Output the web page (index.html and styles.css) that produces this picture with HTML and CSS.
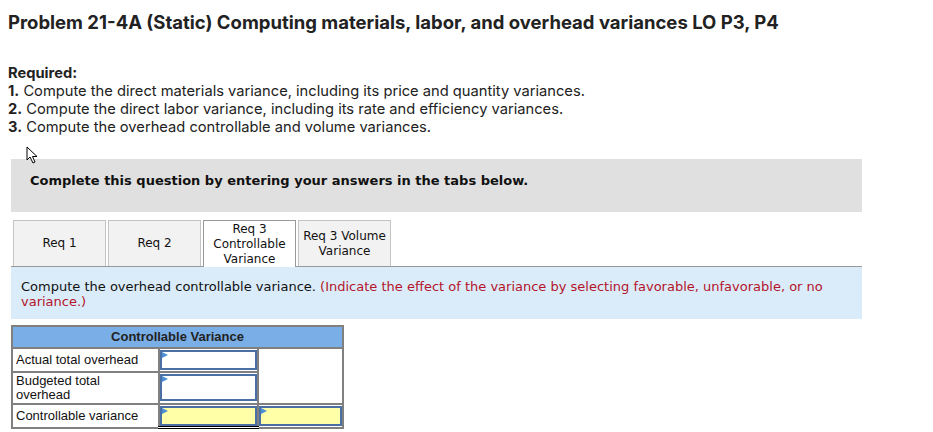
FILE: index.html
```html
<!DOCTYPE html>
<html>
<head>
<meta charset="utf-8">
<link rel="stylesheet" href="styles.css">
</head>
<body>
<h1 class="title">Problem 21-4A (Static) Computing materials, labor, and overhead variances LO P3, P4</h1>
<div class="required">
  <p class="req-head">Required:</p>
  <p><b>1.</b> Compute the direct materials variance, including its price and quantity variances.</p>
  <p><b>2.</b> Compute the direct labor variance, including its rate and efficiency variances.</p>
  <p><b>3.</b> Compute the overhead controllable and volume variances.</p>
</div>
<div class="cursor-row">
  <svg class="cursor" width="13" height="18" viewBox="0 0 13 18"><path d="M1 1 L1 14 L4 11 L7 17 L9 16 L6.5 10.5 L11 10.5 Z" fill="#fff" stroke="#000" stroke-width="1" stroke-linejoin="miter"/></svg>
</div>
<div class="panel">
  <div class="banner">Complete this question by entering your answers in the tabs below.</div>
  <div class="tabs">
    <div class="tab">Req 1</div>
    <div class="tab">Req 2</div>
    <div class="tab active">Req 3<br>Controllable<br>Variance</div>
    <div class="tab">Req 3 Volume<br>Variance</div>
  </div>
  <div class="instr">Compute the overhead controllable variance. <span class="red">(Indicate the effect of the variance by selecting favorable, unfavorable, or no variance.)</span></div>
  <table class="cv">
    <colgroup><col class="c1"><col class="c2"><col class="c3"></colgroup>
    <tr class="hd"><th colspan="3">Controllable Variance</th></tr>
    <tr class="r1">
      <td class="lbl">Actual total overhead</td>
      <td class="inp"><div class="box"></div></td>
      <td class="blank" rowspan="2"></td>
    </tr>
    <tr class="r2">
      <td class="lbl">Budgeted total<br>overhead</td>
      <td class="inp"><div class="box tall"></div></td>
    </tr>
    <tr class="r3">
      <td class="lbl">Controllable variance</td>
      <td class="inp dbl"><div class="box yellow"></div></td>
      <td class="inp"><div class="box yellow"></div></td>
    </tr>
  </table>
</div>
</body>
</html>
```

FILE: styles.css
```css
html, body { margin: 0; padding: 0; background: #fff; }
body { padding: 0 8px; color: #222; }
.title {
  font-family: "Inter", sans-serif;
  font-weight: 700;
  font-size: 18.5px;
  line-height: 22px;
  margin: 0;
  padding-top: 11px;
  color: #222;
}
.required {
  margin-top: 31px;
  font-family: "Inter", sans-serif;
  font-size: 14.7px;
  line-height: 18px;
  color: #222;
}
.required p { margin: 0; }
.req-head { font-weight: 700; }
.cursor-row { height: 23px; padding-left: 18px; padding-top: 10px; box-sizing: border-box; }
.cursor { display: block; position: relative; z-index: 1; }
.panel { margin-left: 3px; width: 851px; }
.banner {
  background: #e0e0e0;
  height: 53px;
  box-sizing: border-box;
  padding: 14px 0 0 19px;
  font-family: "DejaVu Sans", Verdana, sans-serif;
  font-weight: 700;
  font-size: 13px;
  color: #111;
}
.tabs {
  display: flex;
  gap: 2px;
  margin-top: 8px;
  padding-left: 2px;
  border-bottom: 1px solid #999;
}
.tab {
  width: 93px;
  height: 46px;
  box-sizing: border-box;
  background: #f2f2f2;
  border: 1px solid #c4c4c4;
  border-bottom: none;
  display: flex;
  align-items: center;
  justify-content: center;
  text-align: center;
  font-family: "DejaVu Sans", Verdana, sans-serif;
  font-size: 12px;
  line-height: 15px;
  color: #111;
}
.tab.active {
  background: #fff;
  border-color: #999;
  margin-bottom: -1px;
  height: 47px;
}
.instr {
  background: #daecf9;
  height: 52px;
  box-sizing: border-box;
  padding: 12px 10px 0 10px;
  font-family: "DejaVu Sans", Verdana, sans-serif;
  font-size: 13px;
  line-height: 15px;
  color: #111;
}
.red { color: #b5142b; }
.cv {
  margin-top: 6px;
  border-collapse: collapse;
  table-layout: fixed;
  width: 331px;
  font-family: "Liberation Sans", Arial, sans-serif;
  font-size: 13px;
  color: #111;
}
.c1 { width: 147px; }
.c2 { width: 99px; }
.c3 { width: 85px; }
.cv th {
  background: #7aaee6;
  border: 2px solid #808080;
  height: 20px;
  padding: 0;
  font-weight: 700;
  color: #222;
  font-size: 13px;
  line-height: 18px;
}
.cv td {
  border: 2px solid #808080;
  padding: 0;
  vertical-align: top;
}
.cv td.lbl {
  padding: 0 2px 0 3px;
  line-height: 14px;
  vertical-align: middle;
}
.r1 td { height: 21px; }
.r2 td { height: 29px; }
.r3 td { height: 20px; }
.cv td.blank { background: #fff; }
.cv td.inp { padding: 1px 0 0 0; }
.box {
  position: relative;
  height: 20px;
  border: 2px solid #4a6fa5;
  background: #fff;
  box-sizing: border-box;
}
.box.tall { height: 27px; }
.box.yellow { background: #ffffa8; height: 20px; }
.box::before {
  content: "";
  position: absolute;
  left: 0; top: 0;
  border-left: 6px solid #4a8fd8;
  border-top: 3px solid transparent;
  border-bottom: 3px solid transparent;
}
.cv td.dbl { border-bottom: 3px double #000; }
```
